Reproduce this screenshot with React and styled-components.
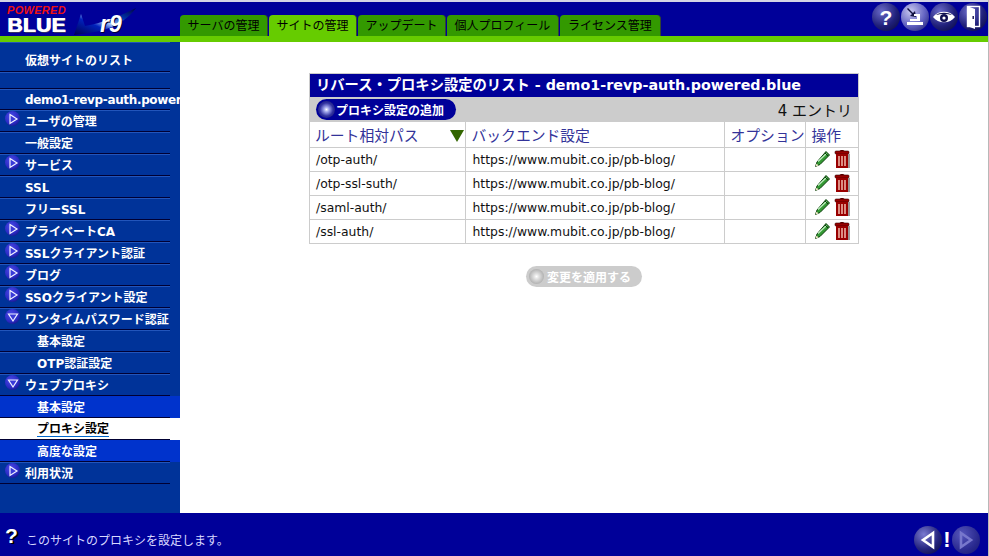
import React from "react";
import styled, { createGlobalStyle } from "styled-components";

const FONT = `"DejaVu Sans", "Noto Sans CJK JP", sans-serif`;

const GlobalStyle = createGlobalStyle`
  html, body {
    margin: 0;
    padding: 0;
    background: #ffffff;
    overflow: hidden;
  }
  * {
    box-sizing: border-box;
  }
`;

const tabs = [
  { label: "サーバの管理", width: 88 },
  { label: "サイトの管理", width: 88, active: true },
  { label: "アップデート", width: 88 },
  { label: "個人プロフィール", width: 112 },
  { label: "ライセンス管理", width: 101 },
];

const navItems = [
  { label: "仮想サイトのリスト", height: 30, align: "top" },
  { label: "", height: 17 },
  { label: "demo1-revp-auth.powered.blue", height: 21, tight: true },
  { label: "ユーザの管理", arrow: "right" },
  { label: "一般設定" },
  { label: "サービス", arrow: "right" },
  { label: "SSL" },
  { label: "フリーSSL" },
  { label: "プライベートCA", arrow: "right" },
  { label: "SSLクライアント認証", arrow: "right" },
  { label: "ブログ", arrow: "right" },
  { label: "SSOクライアント設定", arrow: "right" },
  { label: "ワンタイムパスワード認証", arrow: "down" },
  { label: "基本設定", sub: true },
  { label: "OTP認証設定", sub: true },
  { label: "ウェブプロキシ", arrow: "down" },
  { label: "基本設定", sub: true, state: "open" },
  { label: "プロキシ設定", sub: true, state: "current" },
  { label: "高度な設定", sub: true, state: "open" },
  { label: "利用状況", arrow: "right" },
];

const rows = ["/otp-auth/", "/otp-ssl-suth/", "/saml-auth/", "/ssl-auth/"];
const BACKEND = "https://www.mubit.co.jp/pb-blog/";

const NavArrow = ({ dir }) => (
  <ArrowOrb>
    <svg width="12" height="12" viewBox="0 0 12 12">
      {dir === "right" ? (
        <path d="M3 1.5 L10 6 L3 10.5 Z" fill="#3a3ad8" stroke="#f0f0ff" strokeWidth="1.2" />
      ) : (
        <path d="M1.5 3 L10.5 3 L6 10 Z" fill="#3a3ad8" stroke="#f0f0ff" strokeWidth="1.2" />
      )}
    </svg>
  </ArrowOrb>
);

const Logo = () => (
  <LogoWrap>
    <LogoWords>
      <Powered>POWERED</Powered>
      <Blue>BLUE</Blue>
    </LogoWords>
    <Swoosh>
      <svg width="62" height="29" viewBox="0 0 62 29">
        <defs>
          <linearGradient id="sw" x1="0" y1="1" x2="1" y2="0">
            <stop offset="0" stopColor="#000055" />
            <stop offset="0.35" stopColor="#0022bb" />
            <stop offset="0.5" stopColor="#aaccff" />
            <stop offset="0.7" stopColor="#0033aa" />
            <stop offset="1" stopColor="#000044" />
          </linearGradient>
        </defs>
        <path d="M0 28 L7 7 L11 19 C28 16 44 10 62 1 C54 12 42 20 26 24 C16 26 8 27 0 28 Z" fill="url(#sw)" />
      </svg>
      <Release>r9</Release>
    </Swoosh>
  </LogoWrap>
);

const HelpIcon = () => <OrbGlyph>?</OrbGlyph>;

const InstallIcon = () => (
  <svg width="22" height="22" viewBox="0 0 22 22">
    <path d="M4 2 L9 7 L11 5 L12 11 L6 10 L8 8 L3 3 Z" fill="#101040" />
    <path d="M10 8 H16 V15 H6 V13 H13 V10 H10 Z" fill="#fff" />
    <rect x="3" y="16" width="16" height="3" fill="#fff" />
  </svg>
);

const EyeIcon = () => (
  <svg width="24" height="18" viewBox="0 0 24 18">
    <path d="M1 9 C6 2 18 2 23 9 C18 16 6 16 1 9 Z" fill="#fff" />
    <path d="M4 7 C8 4 16 4 20 7 C16 5.5 8 5.5 4 7 Z" fill="#101050" />
    <circle cx="12" cy="10" r="4" fill="#101050" />
    <circle cx="12" cy="10" r="1.6" fill="#fff" />
  </svg>
);

const DoorIcon = () => (
  <svg width="20" height="26" viewBox="0 0 20 26">
    <rect x="4.5" y="2.5" width="12" height="20" fill="none" stroke="#fff" strokeWidth="1.4" />
    <path d="M4 2 L12 5 V25 L4 22 Z" fill="#fff" />
    <rect x="9.5" y="12" width="1.4" height="3" fill="#101050" />
  </svg>
);

const PencilIcon = () => (
  <svg width="17" height="18" viewBox="0 0 17 18">
    <path d="M12 1.5 L15.5 5 L6 14.5 L1.5 16.5 L3 12 Z" fill="#339933" stroke="#0c3d0c" strokeWidth="1" />
    <path d="M4 11.5 L12.5 3.5" stroke="#bfeebf" strokeWidth="1.2" />
    <path d="M1.5 16.5 L2.5 13.5 L4.5 15.5 Z" fill="#f3e9c8" />
    <path d="M11 3 L14 6" stroke="#0c3d0c" strokeWidth="1" />
  </svg>
);

const TrashIcon = () => (
  <svg width="17" height="20" viewBox="0 0 17 20">
    <path d="M5.5 2 C6 0.5 10 0.5 10.5 2 Z" fill="#660000" />
    <rect x="1" y="2" width="14" height="3" rx="1" fill="#990000" stroke="#330000" strokeWidth="0.6" />
    <rect x="2" y="5" width="12" height="14" fill="#990000" />
    <path d="M5 7 V17 M8 7 V17 M11 7 V17" stroke="#ffd9c9" strokeWidth="1.3" />
    <rect x="14" y="5" width="2" height="14" fill="#999999" />
  </svg>
);

const App = () => (
  <Page>
    <GlobalStyle />
    <TopEdge />
    <Header>
      <Logo />
      <TabBar>
        {tabs.map((tab) => (
          <Tab key={tab.label} $active={tab.active} $width={tab.width}>
            {tab.label}
          </Tab>
        ))}
      </TabBar>
      <HeaderTools>
        <ToolOrb><HelpIcon /></ToolOrb>
        <ToolOrb $lit><InstallIcon /></ToolOrb>
        <ToolOrb><EyeIcon /></ToolOrb>
        <ToolOrb><DoorIcon /></ToolOrb>
      </HeaderTools>
    </Header>
    <GreenBar />
    <Middle>
      <Sidebar>
        {navItems.map((item, key) => (
          <NavRow key={key} $state={item.state} $height={item.height || 22}>
            <NavInner $sub={item.sub} $state={item.state} $align={item.align}>
              {item.arrow && <NavArrow dir={item.arrow} />}
              <NavLabel $state={item.state} $tight={item.tight}>{item.label}</NavLabel>
            </NavInner>
          </NavRow>
        ))}
      </Sidebar>
      <Main>
        <ListBox>
          <TitleBar>リバース・プロキシ設定のリスト - demo1-revp-auth.powered.blue</TitleBar>
          <ToolRow>
            <AddButton>
              <ButtonDot />
              プロキシ設定の追加
            </AddButton>
            <EntryCount>4 エントリ</EntryCount>
          </ToolRow>
          <Table>
            <colgroup>
              <col width="155" />
              <col width="259" />
              <col width="81" />
              <col width="53" />
            </colgroup>
            <thead>
              <tr>
                <HeadCell>
                  <SortWrap>
                    ルート相対パス
                    <SortMark />
                  </SortWrap>
                </HeadCell>
                <HeadCell>バックエンド設定</HeadCell>
                <HeadCell>オプション</HeadCell>
                <HeadCell>操作</HeadCell>
              </tr>
            </thead>
            <tbody>
              {rows.map((path) => (
                <tr key={path}>
                  <Cell>{path}</Cell>
                  <Cell>{BACKEND}</Cell>
                  <Cell />
                  <ActionCell>
                    <Actions>
                      <PencilIcon />
                      <TrashIcon />
                    </Actions>
                  </ActionCell>
                </tr>
              ))}
            </tbody>
          </Table>
        </ListBox>
        <ApplyButton>
          <ApplyDot />
          変更を適用する
        </ApplyButton>
      </Main>
    </Middle>
    <Footer>
      <HelpMark>?</HelpMark>
      <FooterText>このサイトのプロキシを設定します。</FooterText>
      <FooterNav>
        <BackOrb>
          <svg width="18" height="20" viewBox="0 0 18 20">
            <path d="M14 3 L4 10 L14 17 Z" fill="none" stroke="#fff" strokeWidth="2.6" />
          </svg>
        </BackOrb>
        <Bang>!</Bang>
        <NextOrb>
          <svg width="18" height="20" viewBox="0 0 18 20">
            <path d="M4 3 L14 10 L4 17 Z" fill="none" stroke="#7777cc" strokeWidth="2.6" />
          </svg>
        </NextOrb>
      </FooterNav>
    </Footer>
  </Page>
);

const Page = styled.div`
  width: 989px;
  height: 556px;
  display: flex;
  flex-direction: column;
  font-family: ${FONT};
  border-right: 1px solid #b8b8b8;
`;

const TopEdge = styled.div`
  height: 2px;
  background: #d4d4e4;
`;

const Header = styled.div`
  height: 34px;
  background: #000099;
  display: flex;
  align-items: flex-end;
`;

const LogoWrap = styled.div`
  width: 180px;
  height: 34px;
  display: flex;
  padding-left: 7px;
  flex-shrink: 0;
`;

const LogoWords = styled.div`
  width: 67px;
  display: flex;
  flex-direction: column;
`;

const Powered = styled.div`
  font: italic bold 11px/11px "Liberation Sans", sans-serif;
  letter-spacing: 0.3px;
  color: #ee1111;
  margin-top: 3px;
`;

const Blue = styled.div`
  font: 900 21px/17px "Liberation Sans", sans-serif;
  letter-spacing: 0.4px;
  color: #ffffff;
  text-shadow: 1px 0 0 #ffffff, 1px 1px 0 #333366;
`;

const Swoosh = styled.div`
  position: relative;
  width: 62px;
  height: 29px;
  margin-top: 5px;
`;

const Release = styled.span`
  position: absolute;
  left: 26px;
  top: 7px;
  font: italic bold 23px/20px "Liberation Sans", sans-serif;
  color: #ffffff;
  text-shadow: 1px 1px 0 #000033;
`;

const TabBar = styled.div`
  display: flex;
  gap: 1px;
  flex: 1;
`;

const Tab = styled.div`
  width: ${(props) => props.$width}px;
  height: 21px;
  display: flex;
  align-items: center;
  justify-content: center;
  padding-bottom: 2px;
  font-size: 12px;
  color: #000000;
  background: ${(props) => (props.$active ? "#66cc00" : "#339900")};
  border-right: 1px solid #334433;
  border-radius: 4px 4px 0 0;
`;

const HeaderTools = styled.div`
  display: flex;
  gap: 1px;
  align-self: flex-start;
  margin-top: 1px;
  margin-right: 1px;
`;

const ToolOrb = styled.div`
  width: 28px;
  height: 28px;
  border-radius: 50%;
  display: flex;
  align-items: center;
  justify-content: center;
  background: ${(props) =>
    props.$lit
      ? "radial-gradient(circle at 35% 30%, #c8c8f0, #6060c0 55%, #101060 100%)"
      : "radial-gradient(circle at 35% 30%, #6a6ac8, #20207a 55%, #05053a 100%)"};
`;

const OrbGlyph = styled.span`
  font: bold 21px/1 "Liberation Sans", sans-serif;
  color: #ffffff;
`;

const GreenBar = styled.div`
  height: 6px;
  background: #66cc00;
`;

const Middle = styled.div`
  flex: 1;
  display: flex;
  min-height: 0;
`;

const Sidebar = styled.div`
  width: 180px;
  background: #003399;
  overflow: hidden;
  flex-shrink: 0;
`;

const NavRow = styled.div`
  height: ${(props) => props.$height}px;
  background: ${(props) =>
    props.$state === "open" ? "#0033cc" : props.$state === "current" ? "#ffffff" : "transparent"};
`;

const NavInner = styled.div`
  width: 170px;
  height: 100%;
  position: relative;
  display: flex;
  align-items: center;
  padding-left: ${(props) => (props.$sub ? 37 : 25)}px;
  padding-top: ${(props) => (props.$align === "top" ? 8 : 2)}px;
  white-space: nowrap;
  border-bottom: 1px solid #000033;
  box-shadow: inset 0 1px 0 ${(props) => (props.$state ? "transparent" : "#2255bb")};
`;

const NavLabel = styled.span`
  font-size: 12px;
  font-weight: bold;
  letter-spacing: ${(props) => (props.$tight ? "-0.35px" : "normal")};
  color: ${(props) => (props.$state === "current" ? "#000000" : "#ffffff")};
  border-bottom: ${(props) => (props.$state === "current" ? "1px solid #0066cc" : "none")};
  line-height: 14px;
`;

const ArrowOrb = styled.span`
  position: absolute;
  left: 5px;
  top: 1px;
  width: 15px;
  height: 15px;
  border-radius: 50%;
  display: flex;
  align-items: center;
  justify-content: center;
  background: radial-gradient(circle at 40% 35%, #4a4ae6, #2a2ac4 55%, #0a0a60 100%);
`;

const Main = styled.div`
  flex: 1;
  background: #ffffff;
  display: flex;
  flex-direction: column;
  align-items: center;
  padding-top: 31px;
`;

const ListBox = styled.div`
  width: 550px;
  border: 1px solid #cccccc;
`;

const TitleBar = styled.div`
  height: 23px;
  background: #000099;
  color: #ffffff;
  font-size: 14.3px;
  font-weight: bold;
  line-height: 23px;
  padding-left: 6px;
  white-space: nowrap;
`;

const ToolRow = styled.div`
  height: 25px;
  background: #cccccc;
  display: flex;
  align-items: center;
  justify-content: space-between;
  padding: 0 6px;
`;

const AddButton = styled.div`
  width: 140px;
  height: 21px;
  border-radius: 11px;
  background: #000099;
  color: #ffffff;
  font-size: 12px;
  font-weight: bold;
  display: flex;
  align-items: center;
  padding-left: 2px;
  white-space: nowrap;
`;

const ButtonDot = styled.span`
  width: 17px;
  height: 17px;
  border-radius: 50%;
  margin-right: 1px;
  background: radial-gradient(circle at 50% 50%, #ffffff 0, #aab0f0 18%, #3030a0 55%, #101060 100%);
`;

const EntryCount = styled.div`
  font-size: 15px;
  color: #111111;
`;

const Table = styled.table`
  width: 100%;
  table-layout: fixed;
  border-collapse: collapse;
`;

const HeadCell = styled.th`
  height: 25px;
  padding: 0 0 0 6px;
  font-size: 14.8px;
  font-weight: normal;
  text-align: left;
  color: #333399;
  white-space: nowrap;
  overflow: hidden;
  border-left: 1px solid #cccccc;
  &:first-child {
    border-left: none;
    padding: 0 1px 0 5px;
  }
`;

const SortWrap = styled.div`
  display: flex;
  align-items: center;
  justify-content: space-between;
`;

const SortMark = styled.span`
  width: 0;
  height: 0;
  margin-top: 3px;
  border-left: 7px solid transparent;
  border-right: 7px solid transparent;
  border-top: 12px solid #336600;
`;

const Cell = styled.td`
  height: 24px;
  padding: 0 0 0 7px;
  font-size: 12.4px;
  color: #111111;
  border-top: 1px solid #cccccc;
  border-left: 1px solid #cccccc;
  white-space: nowrap;
  &:first-child {
    border-left: none;
    padding-left: 6px;
  }
`;

const ActionCell = styled(Cell)`
  padding: 0 0 0 8px;
`;

const Actions = styled.div`
  display: flex;
  align-items: center;
  gap: 3px;
  margin-top: -1px;
`;

const ApplyButton = styled.div`
  width: 116px;
  height: 21px;
  margin-top: 22px;
  border-radius: 11px;
  background: #cccccc;
  color: #ffffff;
  font-size: 12px;
  font-weight: bold;
  display: flex;
  align-items: center;
  padding-left: 3px;
  white-space: nowrap;
`;

const ApplyDot = styled.span`
  width: 15px;
  height: 15px;
  border-radius: 50%;
  margin-right: 3px;
  background: radial-gradient(circle at 50% 50%, #ffffff 0, #e0e0e0 25%, #a8a8a8 80%);
`;

const Footer = styled.div`
  height: 43px;
  background: #000099;
  display: flex;
  align-items: center;
  flex-shrink: 0;
`;

const HelpMark = styled.span`
  width: 26px;
  padding-left: 5px;
  margin-top: 2px;
  font: bold 21px/1 "Liberation Sans", sans-serif;
  color: #ffffff;
  text-shadow: 2px 1px 0 #000000;
`;

const FooterText = styled.span`
  flex: 1;
  margin-top: 9px;
  font-size: 12px;
  color: #d8d8ff;
`;

const FooterNav = styled.div`
  display: flex;
  align-items: center;
  margin-top: 10px;
  margin-right: 8px;
`;

const BackOrb = styled.div`
  width: 28px;
  height: 28px;
  border-radius: 50%;
  display: flex;
  align-items: center;
  justify-content: center;
  background: radial-gradient(circle at 35% 30%, #7a7ad0, #25257f 55%, #05053a 100%);
`;

const NextOrb = styled(BackOrb)`
  background: radial-gradient(circle at 35% 30%, #5555bb, #2a2a90 60%, #151570 100%);
`;

const Bang = styled.span`
  width: 10px;
  text-align: center;
  font: bold 22px/1 "Liberation Sans", sans-serif;
  color: #ffffff;
`;

export default App;
